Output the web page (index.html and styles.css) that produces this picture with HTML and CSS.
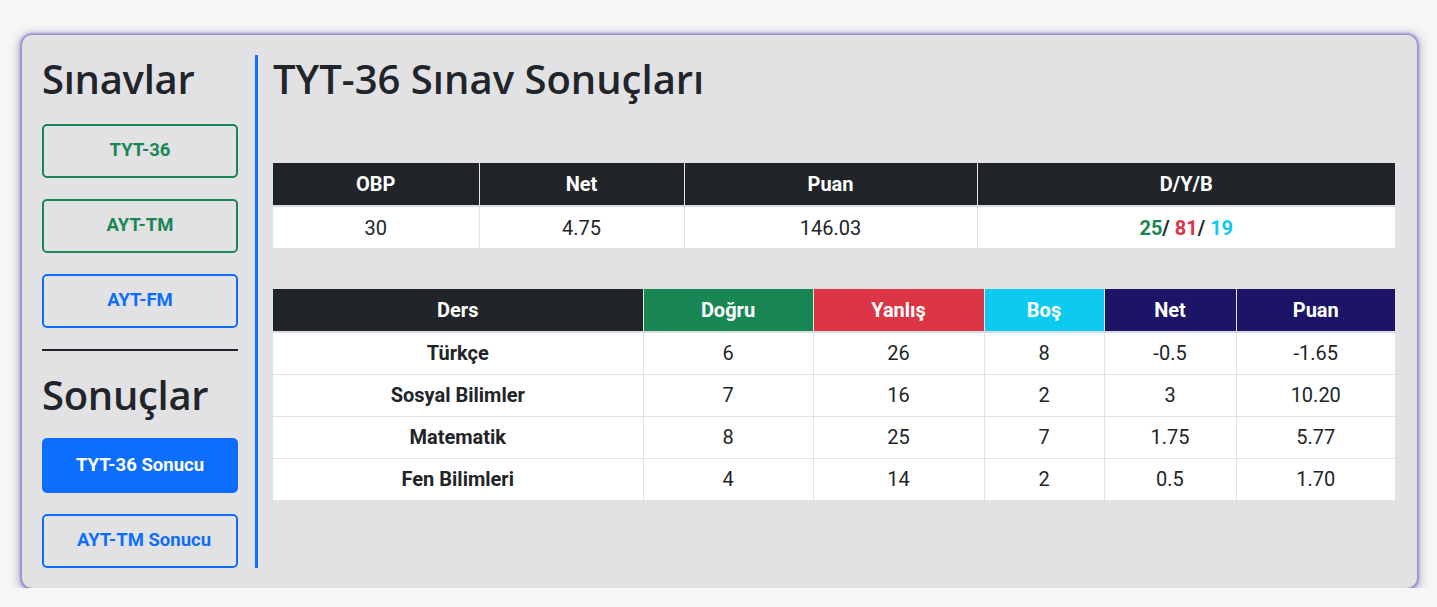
FILE: index.html
```html
<!DOCTYPE html>
<html lang="tr">
<head>
<meta charset="utf-8">
<title>Sınav Sonuçları</title>
<link rel="stylesheet" href="styles.css">
</head>
<body>
<div class="panel">
  <aside class="sidebar">
    <h2 class="side-title">Sınavlar</h2>
    <a class="btn btn-green">TYT-36</a>
    <a class="btn btn-green">AYT-TM</a>
    <a class="btn btn-blue">AYT-FM</a>
    <hr class="sep">
    <h2 class="side-title side-title-2">Sonuçlar</h2>
    <a class="btn btn-primary">TYT-36 Sonucu</a>
    <a class="btn btn-blue btn-shift">AYT-TM Sonucu</a>
  </aside>
  <main class="main">
    <h1 class="title">TYT-36 Sınav Sonuçları</h1>
    <table class="tbl tbl-summary">
      <colgroup><col style="width:206px"><col style="width:205px"><col style="width:293px"><col></colgroup>
      <thead>
        <tr><th>OBP</th><th>Net</th><th>Puan</th><th>D/Y/B</th></tr>
      </thead>
      <tbody>
        <tr><td>30</td><td>4.75</td><td>146.03</td><td class="dyb"><span class="c-green">25</span>/ <span class="c-red">81</span>/ <span class="c-cyan">19</span></td></tr>
      </tbody>
    </table>
    <table class="tbl tbl-detail">
      <colgroup><col style="width:370px"><col style="width:170px"><col style="width:171px"><col style="width:120px"><col style="width:132px"><col></colgroup>
      <thead>
        <tr><th>Ders</th><th class="h-green">Doğru</th><th class="h-red">Yanlış</th><th class="h-cyan">Boş</th><th class="h-navy">Net</th><th class="h-navy">Puan</th></tr>
      </thead>
      <tbody>
        <tr><td class="ders">Türkçe</td><td>6</td><td>26</td><td>8</td><td>-0.5</td><td>-1.65</td></tr>
        <tr><td class="ders">Sosyal Bilimler</td><td>7</td><td>16</td><td>2</td><td>3</td><td>10.20</td></tr>
        <tr><td class="ders">Matematik</td><td>8</td><td>25</td><td>7</td><td>1.75</td><td>5.77</td></tr>
        <tr><td class="ders">Fen Bilimleri</td><td>4</td><td>14</td><td>2</td><td>0.5</td><td>1.70</td></tr>
      </tbody>
    </table>
  </main>
</div>
</body>
</html>
```

FILE: styles.css
```css
* { box-sizing: border-box; }
html, body { margin: 0; padding: 0; }
body {
  background: #f6f6f6;
  font-family: Roboto, "Liberation Sans", sans-serif;
  color: #212529;
}
.panel {
  margin: 35px 20px 0 22px;
  height: 553px;
  background: #e2e2e5;
  border-radius: 10px;
  box-shadow: 0 0 2px 2px rgba(110, 100, 180, 0.55), 0 2px 10px 3px rgba(90, 80, 160, 0.45);
  padding: 20px 22px 20px 20px;
  display: flex;
}
.sidebar {
  width: 196px;
  flex: none;
  display: flex;
  flex-direction: column;
}
.side-title {
  font-family: "Open Sans", Lato, sans-serif;
  font-weight: 600;
  font-size: 40px;
  line-height: 48px;
  margin: 0 0 21px 0;
  color: #212529;
  letter-spacing: -0.3px;
}
.side-title-2 { margin-top: 20px; margin-bottom: 19px; }
.btn {
  display: flex;
  align-items: center;
  justify-content: center;
  height: 54px;
  border: 2px solid;
  border-radius: 5px;
  font-family: Roboto, sans-serif;
  font-weight: 700;
  font-size: 18.5px;
  margin-bottom: 21px;
  padding-bottom: 2px;
}
.btn-green { color: #198754; border-color: #198754; }
.btn-blue { color: #0d6efd; border-color: #0d6efd; }
.btn-primary { color: #fff; background: #0d6efd; border-color: #0d6efd; height: 55px; }
.btn-shift { padding-left: 8px; }
.sidebar .btn:last-child { margin-bottom: 0; }
.sep {
  margin: 0;
  border: 0;
  border-top: 2px solid #212529;
  height: 0;
}
.main {
  flex: 1;
  margin-left: 17px;
  border-left: 3px solid #0d6efd;
  padding-left: 15px;
}
.title {
  font-family: "Open Sans", Lato, sans-serif;
  font-weight: 600;
  font-size: 40px;
  line-height: 48px;
  margin: 0 0 60px 0;
  color: #212529;
}
.tbl {
  width: 100%;
  border-collapse: collapse;
  table-layout: fixed;
  background: #fff;
  font-size: 20px;
}
.tbl-summary { margin-bottom: 41px; }
.tbl th {
  background: #212529;
  color: #fff;
  font-weight: 700;
  height: 43px;
  padding: 0 8px;
  text-align: center;
  border-left: 1px solid #e5e5e5;
  border-bottom: 2px solid #dcdce6;
}
.tbl th:first-child { border-left: 0; }
.tbl td {
  height: 42px;
  padding: 0 8px;
  text-align: center;
  border-left: 1px solid #dee2e6;
  border-top: 1px solid #dee2e6;
}
.tbl td:first-child { border-left: 0; }
.tbl td.ders { font-weight: 700; }
.h-green { background: #198754 !important; }
.h-red { background: #dc3545 !important; }
.h-cyan { background: #0dcaf0 !important; }
.h-navy { background: #1c1466 !important; }
.dyb { font-weight: 700; }
.c-green { color: #198754; }
.c-red { color: #dc3545; }
.c-cyan { color: #0dcaf0; }
```
